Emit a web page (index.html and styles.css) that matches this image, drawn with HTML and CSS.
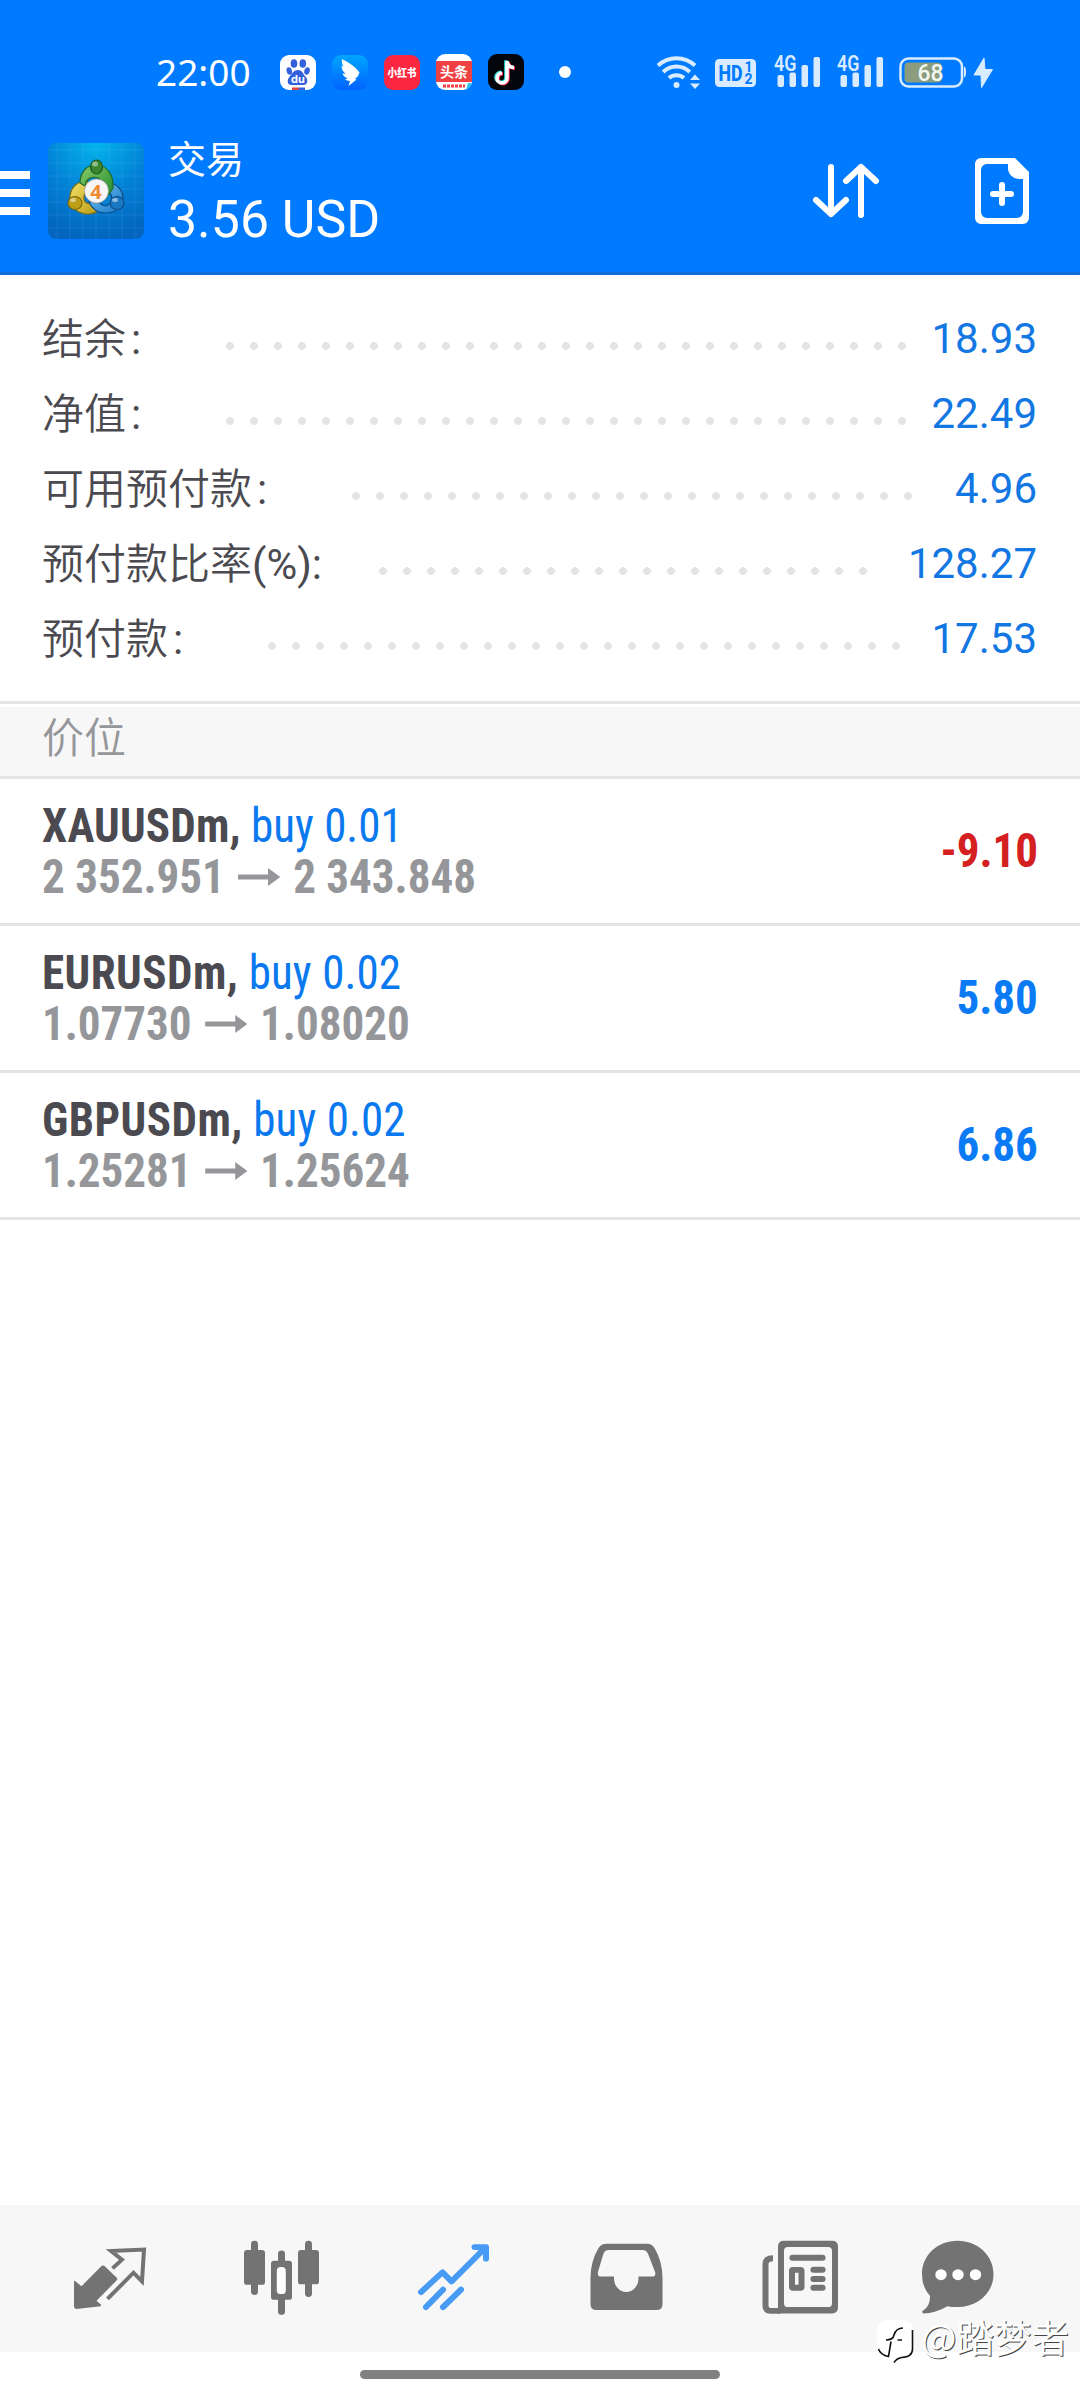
FILE: index.html
```
<!DOCTYPE html>
<html lang="zh-CN">
<head>
<meta charset="utf-8">
<title>交易</title>
<link rel="stylesheet" href="styles.css">
</head>
<body>
<div class="screen">
  <header class="top">
    <div class="statusbar">
      <span class="clock">22:00</span>
      <svg class="apps" width="376" height="40" viewBox="0 0 376 40">
        <defs>
          <linearGradient id="wing" x1="0" y1="0" x2="0" y2="1"><stop offset="0" stop-color="#00a6ff"/><stop offset="1" stop-color="#0062ff"/></linearGradient>
          <clipPath id="c1"><rect x="0" y="2" width="36" height="35" rx="9"/></clipPath>
          <clipPath id="c4"><rect x="156" y="1" width="36" height="36" rx="9"/></clipPath>
        </defs>
        <g clip-path="url(#c1)">
          <rect x="0" y="2" width="36" height="35" fill="#fff"/>
          <g fill="#3460dc">
            <ellipse cx="14" cy="10.500" rx="3.300" ry="4.300"/><ellipse cx="22.800" cy="10.500" rx="3.300" ry="4.300"/>
            <ellipse cx="9.300" cy="18" rx="2.700" ry="3.800" transform="rotate(-15 9.300 18)"/><ellipse cx="27" cy="18" rx="2.700" ry="3.800" transform="rotate(15 27 18)"/>
            <path d="M18 17c4 0 4.500 3 7 6c4 4 2.500 9-1.500 9h-12c-4.500 0-5-5-1.500-9c2.500-3 4-6 8-6z"/>
          </g>
          <text x="18" y="30" class="t-du" text-anchor="middle">du</text>
          <path d="M12 34.500h7v3h-7z" fill="#e0433f"/><path d="M19 34.500h6v3h-6z" fill="#3460dc"/>
        </g>
        <rect x="52" y="2" width="36" height="35" rx="9" fill="url(#wing)"/>
        <path d="M62 6c6 3 13 7 17.500 13.500l-1.500 3.500l-3 3l1.500 .5l-8 6.500l1.500-5c-2.500 0-4-.7-5-2l3-.5c-3-1-5-3-5.500-5l3 .3c-2.500-2-4-5-4-8l2 1c-1.500-2.500-2-5-1.500-7.800z" fill="#fff"/>
        <rect x="104" y="2" width="36" height="35" rx="9" fill="#fe2742"/>
        <text x="122" y="23.500" class="t-red" text-anchor="middle" textLength="29" lengthAdjust="spacingAndGlyphs">小红书</text>
        <g clip-path="url(#c4)">
          <rect x="156" y="1" width="36" height="36" fill="#fff"/>
          <rect x="156" y="8" width="36" height="21" fill="#f04142"/>
          <text x="174" y="24" class="t-tt" text-anchor="middle">头条</text>
          <path d="M163 33h22" stroke="#f04142" stroke-width="3" stroke-dasharray="3 1"/>
          <path d="M186 37l2-7h5v7z" fill="#27c5e8"/>
        </g>
        <rect x="208" y="1" width="36" height="36" rx="9" fill="#05050c"/>
        <g fill="none" stroke-width="3.600">
          <path d="M226 7.300v17a5 5 0 1 1-5-5M226 8c.5 4 3 6 7 6" stroke="#25e4df"/>
          <path d="M228 8.700v17a5 5 0 1 1-5-5M228 9c.5 4 3 6 7 6" stroke="#fe2c55"/>
          <path d="M227 8v17a5 5 0 1 1-5-5M227 8.500c.5 4 3 6 7 6" stroke="#fff"/>
        </g>
        <circle cx="285" cy="19" r="6" fill="#fff"/>
      </svg>
      <svg class="signals" width="350" height="40" viewBox="0 0 350 40">
        <g fill="none" stroke="#d9ecff" stroke-width="4">
          <path d="M2 12.500a27 27 0 0 1 37 0M7.200 19a19 19 0 0 1 26.600 0M13 25a11.500 11.500 0 0 1 15 0"/>
        </g>
        <g fill="#d9ecff">
          <circle cx="20.500" cy="32" r="3"/>
          <path d="M34 27l5-5.500l5 5.500zM34 30.500h10l-5 5.500z"/>
          <rect x="59" y="6" width="41" height="28" rx="4.500"/>
          <rect x="121.500" y="22" width="6.500" height="12" rx="2"/><rect x="133.500" y="19.500" width="6.500" height="14.500" rx="2"/><rect x="145.500" y="12" width="6.500" height="22" rx="2"/><rect x="157.500" y="4" width="6.500" height="30" rx="2"/>
          <rect x="184.500" y="22" width="6.500" height="12" rx="2"/><rect x="196.500" y="19.500" width="6.500" height="14.500" rx="2"/><rect x="208.500" y="12" width="6.500" height="22" rx="2"/><rect x="220.500" y="4" width="6.500" height="30" rx="2"/>
          <path d="M308 13.500c2.800 0 2.800 11 0 11z"/>
          <path d="M328 5l-10 17h7l.5 12.500l11-18h-7.500z" stroke="#d9ecff" stroke-linejoin="round"/>
        </g>
        <text x="62.500" y="28" class="t-hd" textLength="24" lengthAdjust="spacingAndGlyphs">HD</text>
        <text x="88.500" y="18.500" class="t-hds">1</text><text x="88.500" y="31" class="t-hds">2</text>
        <text x="118" y="18" class="t-4g" textLength="22.500" lengthAdjust="spacingAndGlyphs">4G</text>
        <text x="181" y="18" class="t-4g" textLength="22.500" lengthAdjust="spacingAndGlyphs">4G</text>
        <rect x="244.500" y="5.500" width="61.500" height="28" rx="8" fill="none" stroke="#d9ecff" stroke-width="2.500"/>
        <rect x="248.500" y="9.500" width="37" height="20" rx="4" fill="#8b9d7e"/>
        <text x="274.500" y="28" class="t-bat" text-anchor="middle" textLength="26" lengthAdjust="spacingAndGlyphs">68</text>
      </svg>
    </div>
    <div class="appbar">
      <svg class="menu" width="30" height="44" viewBox="0 0 30 44"><path d="M0 4h30M0 22h30M0 40h30" stroke="#fff" stroke-width="8"/></svg>
      <svg class="logo" width="96" height="96" viewBox="0 0 96 96">
        <defs>
          <radialGradient id="bg" cx=".5" cy="0" r="1"><stop offset="0" stop-color="#04b5ea"/><stop offset=".55" stop-color="#0280d6"/><stop offset="1" stop-color="#0365bd"/></radialGradient>
          <linearGradient id="gr" x1="0" y1="0" x2="1" y2="1"><stop offset="0" stop-color="#8ccb6a"/><stop offset="1" stop-color="#1f8a2c"/></linearGradient>
          <linearGradient id="ye" x1="0" y1="0" x2="1" y2="1"><stop offset="0" stop-color="#f4e36a"/><stop offset="1" stop-color="#b79a10"/></linearGradient>
          <linearGradient id="bl" x1="0" y1="0" x2="1" y2="1"><stop offset="0" stop-color="#7cc8f4"/><stop offset="1" stop-color="#1374c4"/></linearGradient>
        </defs>
        <rect width="96" height="96" rx="8" fill="url(#bg)"/>
        <path d="M9 0v96M22 0v96M35 0v96M48 0v96M61 0v96M74 0v96M87 0v96M0 7h96M0 20h96M0 33h96M0 46h96M0 59h96M0 72h96M0 85h96" stroke="#6fd0ff" stroke-opacity=".14"/>
        <g stroke-width="1.200">
          <path d="M39 38c-10 0-17 7-17 17c0 9 8 16 18 16c5 0 9-2 12-5l-7-6c-6 2-10-1-9-7c1-4 4-6 8-7z" fill="url(#ye)" stroke="#86700c"/>
          <path d="M60 39c9 2 15 8 15 16c0 9-7 15-17 15c-8 0-14-4-17-11l10-1c2 5 7 6 10 3c4-3 4-8 0-12z" fill="url(#bl)" stroke="#0d4f8e"/>
          <path d="M48 22c11 0 18 10 17 23l-6 9c0-9-3-16-9-19c-7-2-12 1-13 8l-5-3c0-10 6-18 16-18z" fill="url(#gr)" stroke="#1d6d2c"/>
          <ellipse cx="48.500" cy="24" rx="6" ry="7" fill="#39862f" stroke="#1d5d24"/>
          <ellipse cx="27" cy="60" rx="7" ry="6.500" fill="#bb9f16" stroke="#80680a"/><ellipse cx="69" cy="60" rx="7" ry="6.500" fill="#1a77c1" stroke="#0d4f8e"/>
        </g>
        <ellipse cx="47" cy="21" rx="3" ry="2.500" fill="#fff" opacity=".45"/><ellipse cx="25" cy="57" rx="3" ry="2" fill="#fff" opacity=".5"/><ellipse cx="67" cy="57" rx="3" ry="2" fill="#fff" opacity=".5"/>
        <circle cx="48.500" cy="48" r="12" fill="#f6f6f6" stroke="#999" stroke-width=".7"/>
        <text x="48" y="55.500" class="t-four" text-anchor="middle">4</text>
      </svg>
      <div class="titles"><div class="title">交易</div><div class="sum">3.56 USD</div></div>
      <svg class="sort" width="68" height="56" viewBox="0 0 68 56"><path d="M19 4v47M4 37l15 14l15-14M49 52V4M34 18L49 4l15 14" fill="none" stroke="#fff" stroke-width="6" stroke-linecap="round" stroke-linejoin="round"/></svg>
      <svg class="add" width="54" height="66" viewBox="0 0 54 66"><path fill="#fff" fill-rule="evenodd" d="M6 0h34l14 14v46a6 6 0 0 1-6 6H6a6 6 0 0 1-6-6V6a6 6 0 0 1 6-6zM12 6a6 6 0 0 0-6 6v42a6 6 0 0 0 6 6h30a6 6 0 0 0 6-6V21h-4a11 11 0 0 1-11-11V6z"/><path d="M27 27v18M18 36h18" stroke="#fff" stroke-width="6" stroke-linecap="round"/></svg>
    </div>
  </header>

  <section class="summary">
    <div class="line"><span class="label">结余<i>:</i></span><span class="dots d29"></span><span class="value">18.93</span></div>
    <div class="line"><span class="label">净值<i>:</i></span><span class="dots d29"></span><span class="value">22.49</span></div>
    <div class="line"><span class="label">可用预付款<i>:</i></span><span class="dots d24"></span><span class="value">4.96</span></div>
    <div class="line"><span class="label">预付款比率<em>(%):</em></span><span class="dots d21"></span><span class="value">128.27</span></div>
    <div class="line"><span class="label">预付款<i>:</i></span><span class="dots d27"></span><span class="value">17.53</span></div>
  </section>

  <h2 class="section">价位</h2>

  <ul class="positions">
    <li class="pos"><div class="info"><div class="row1"><b>XAUUSDm,</b> buy 0.01</div><div class="row2"><span>2 352.951</span><svg class="arrow" width="45" height="18" viewBox="0 0 45 18"><path d="M0 6.500h32V0l13 9l-13 9v-6.500H0z" fill="#95969a"/></svg><span>2 343.848</span></div></div><div class="profit loss">-9.10</div></li>
    <li class="pos"><div class="info"><div class="row1 wide"><b>EURUSDm,</b> buy 0.02</div><div class="row2"><span>1.07730</span><svg class="arrow" width="45" height="18" viewBox="0 0 45 18"><path d="M0 6.500h32V0l13 9l-13 9v-6.500H0z" fill="#95969a"/></svg><span>1.08020</span></div></div><div class="profit">5.80</div></li>
    <li class="pos"><div class="info"><div class="row1 wide"><b>GBPUSDm,</b> buy 0.02</div><div class="row2"><span>1.25281</span><svg class="arrow" width="45" height="18" viewBox="0 0 45 18"><path d="M0 6.500h32V0l13 9l-13 9v-6.500H0z" fill="#95969a"/></svg><span>1.25624</span></div></div><div class="profit">6.86</div></li>
  </ul>

  <nav class="tabs">
    <svg width="1080" height="147" viewBox="0 2205.5 1080 151.900" preserveAspectRatio="none">
      <g fill="#737373">
        <path d="M74 2284.500q0-1 1-.500l6.500 5.500l19.500-20.500q2-2 4 0l11.500 11.500q1.500 1.500 0 3l-20 21l4.500 4q.5 1-.5 1.500l-24 3q-2.500 0-2.500-2.500z"/>
        <rect x="244" y="2252" width="21" height="36" rx="3"/><rect x="251" y="2242.500" width="7" height="56" rx="3.500"/>
        <rect x="298" y="2252" width="21" height="35.500" rx="3"/><rect x="305" y="2242.500" width="7" height="58" rx="3.500"/>
        <rect x="278" y="2252.500" width="7" height="66.500" rx="3.500"/><rect x="271" y="2263" width="21" height="40.500" rx="3"/>
        <path fill-rule="evenodd" d="M607 2245.500h40q5 0 7.500 4.500q8 14 8 31v27q0 6-6 6h-60q-6 0-6-6v-27q0-17 8-31q2.500-4.500 8.500-4.500zM609 2252q-4 0-5.500 3.500l-5.500 19q-1 5 3 5h13v2a12 13.500 0 0 0 24.500 0v-2h13q5 0 3.500-5l-7-18.500q-1.500-4-5.500-4z"/>
        <path d="M957.500 2242.500c20 0 36 15 36 34.500s-16 34-36 34q-6 0-10-1c-8 4.500-16 7.500-24 7.500q-2-.5-1-2.500c6-4 7.500-9 7.500-15.500q-8-9-8-22.500c0-19.500 15.500-34.500 35.500-34.500z"/>
        <path fill-rule="evenodd" d="M784 2242.500h48q6 0 6 6v63q0 6-6 6h-54v-69q0-6 6-6zM788 2249q-4 0-4 4v54q0 4 4 4h40q4 0 4-4v-54q0-4-4-4z"/>
      </g>
      <rect x="276.800" y="2269.500" width="9" height="28" rx="4" fill="#fff"/>
      <g fill="none" stroke="#737373">
        <path d="M112.500 2271l9.500-9l-11-9l33-1.500l-2 33l-8.500-9l-26 27" stroke-width="4"/>
        <path d="M773 2260.500q-7.500 0-7.500 6v43q0 5.500 6 5.500h9" stroke-width="6"/>
        <path d="M792.500 2260h30M813.500 2272.500h9M813.500 2282h9M813.500 2291h9" stroke-width="6.200" stroke-linecap="round"/>
        <rect x="792" y="2272.500" width="9.500" height="18.500" rx="1" stroke-width="6"/>
      </g>
      <g fill="#fff"><circle cx="941" cy="2277.500" r="5.700"/><circle cx="958" cy="2277.500" r="5.700"/><circle cx="975.500" cy="2277.500" r="5.700"/></g>
      <g fill="none" stroke="#479bf5" stroke-width="6" stroke-linecap="round" stroke-linejoin="round">
        <path d="M421 2295.500l21.500-20.500l9 9.500l33-34M474.500 2249h11.500v12"/><path d="M426 2311l17-18M443 2311l18-18"/>
      </g>
    </svg>
  </nav>
  <div class="home"><div class="handle"></div></div>
  <div class="watermark">
    <svg width="38" height="44" viewBox="0 0 38 44"><path d="M12 0h13q12 0 12 12v15q0 8-9 10h-5l-5 5q-1-4-5-5q-12-1-12-10V12Q1 0 12 0z" fill="#fff"/><path d="M36.500 10v19q0 8-11 8.500q-5 1-7.500 5M2.500 29q2 6 10 7.500l2.500-15M10 20q7 0 8-5q2-7 9-7M21.500 20h4.500" fill="none" stroke="#111" stroke-width="1.600"/></svg>
    <span>@踏梦者</span>
  </div>
</div>
</body>
</html>
```
FILE: styles.css
```
* { box-sizing: border-box; }
body { margin: 0; background: #fff; font-family: Roboto, "Noto Sans CJK SC", sans-serif; }
.screen { position: relative; width: 1080px; height: 2400px; display: flex; flex-direction: column; overflow: hidden; }
svg { display: block; flex: none; overflow: visible; }

.top { height: 275px; background: #007aff; border-bottom: 3px solid #126ed6; color: #fff; }
.statusbar { height: 142px; padding: 53px 0 0 156px; display: flex; }
.clock { width: 124px; margin-top: -1px; font: 37px/40px "Noto Sans", sans-serif; white-space: nowrap; }
.t-du { font: bold 11px Inter, sans-serif; fill: #fff; }
.t-red { font: 900 11px "Noto Sans CJK SC", sans-serif; fill: #fff; }
.t-tt { font: 700 14px "Noto Sans CJK SC", sans-serif; fill: #fff; }
.t-hd { font: 800 22px Roboto, sans-serif; fill: #007aff; }
.t-hds { font: bold 14px Roboto, sans-serif; fill: #007aff; }
.t-4g { font: 600 22px Roboto, sans-serif; fill: #d9ecff; }
.t-bat { font: 500 24.5px Roboto, sans-serif; fill: #f1f7ee; }
.t-four { font: bold 20px "Noto Sans", sans-serif; fill: #f08a33; }
.appbar { display: flex; height: 130px; }
.menu { margin: 29px 18px 0 0; }
.logo { margin: 1px 24px 0 0; }
.titles { width: 644px; }
.title { height: 48px; font-size: 38px; line-height: 36px; }
.sum { font-size: 51.8px; line-height: 60px; }
.sort { margin-top: 21px; }
.add { margin: 16px 0 0 95px; }

.summary { height: 429px; padding: 26px 43px 0 42px; border-bottom: 3px solid #e4e4e4; }
.line { display: flex; height: 75px; align-items: center; font-size: 42px; }
.label { flex: 1; margin-top: -7px; color: #4b4a50; font-weight: 350; white-space: nowrap; }
.label i, .label em { font-style: normal; font-weight: 400; }
.label i { margin-left: 5px; }
.dots { height: 8px; margin-top: 15px; background: radial-gradient(circle at 12px 4px, #e4e4e4 3.6px, transparent 4.3px) 0 0 / 24px 8px repeat-x; }
.d29 { width: 696px; margin-right: -9px; }
.d24 { width: 576px; margin-right: -15px; }
.d21 { width: 504px; margin-right: 30px; }
.d27 { width: 648px; margin-right: -3px; }
.value { width: 132px; text-align: right; color: #1277e2; }

.section { margin: 3px 0 0; height: 72px; padding-left: 42px; background: #f7f7f7; border-bottom: 3px solid #e4e4e4; color: #95969a; font-size: 42px; font-weight: 350; line-height: 64px; }

.positions { margin: 0; padding: 0; list-style: none; flex: 1; }
.pos { display: flex; justify-content: space-between; align-items: center; height: 147px; padding: 0 42px; border-bottom: 3px solid #e4e4e4; font-size: 48px; font-family: "Roboto Condensed", Roboto, sans-serif; font-stretch: 75%; white-space: nowrap; }
.info { transform: scaleX(.938); transform-origin: left; }
.row1, .row2 { height: 51px; line-height: 51px; }
.row1 { color: #0a78ee; }
.row1 b { color: #4b4a50; letter-spacing: .2px; }
.wide b { letter-spacing: .5px; }
.wide { letter-spacing: .1px; }
.row2 { display: flex; align-items: center; color: #95969a; font-weight: bold; }
.arrow { margin: 0 14px; }
.profit { margin-top: -1px; font-weight: bold; color: #0a7bf5; transform: scaleX(.938); transform-origin: right; }
.loss { color: #d42020; }

.tabs { height: 147px; background: #f7f7f7; }
.home { height: 48px; padding-top: 18px; }
.handle { width: 360px; height: 9px; margin: 0 auto; border-radius: 5px; background: #808080; }
.watermark { position: absolute; left: 876px; top: 2320px; display: flex; color: #fff; font: 37.5px/38px "Noto Sans CJK SC", sans-serif; text-shadow: 1px 1px 0 #444; white-space: nowrap; }
.watermark span { margin: -3px 0 0 7px; }
```
